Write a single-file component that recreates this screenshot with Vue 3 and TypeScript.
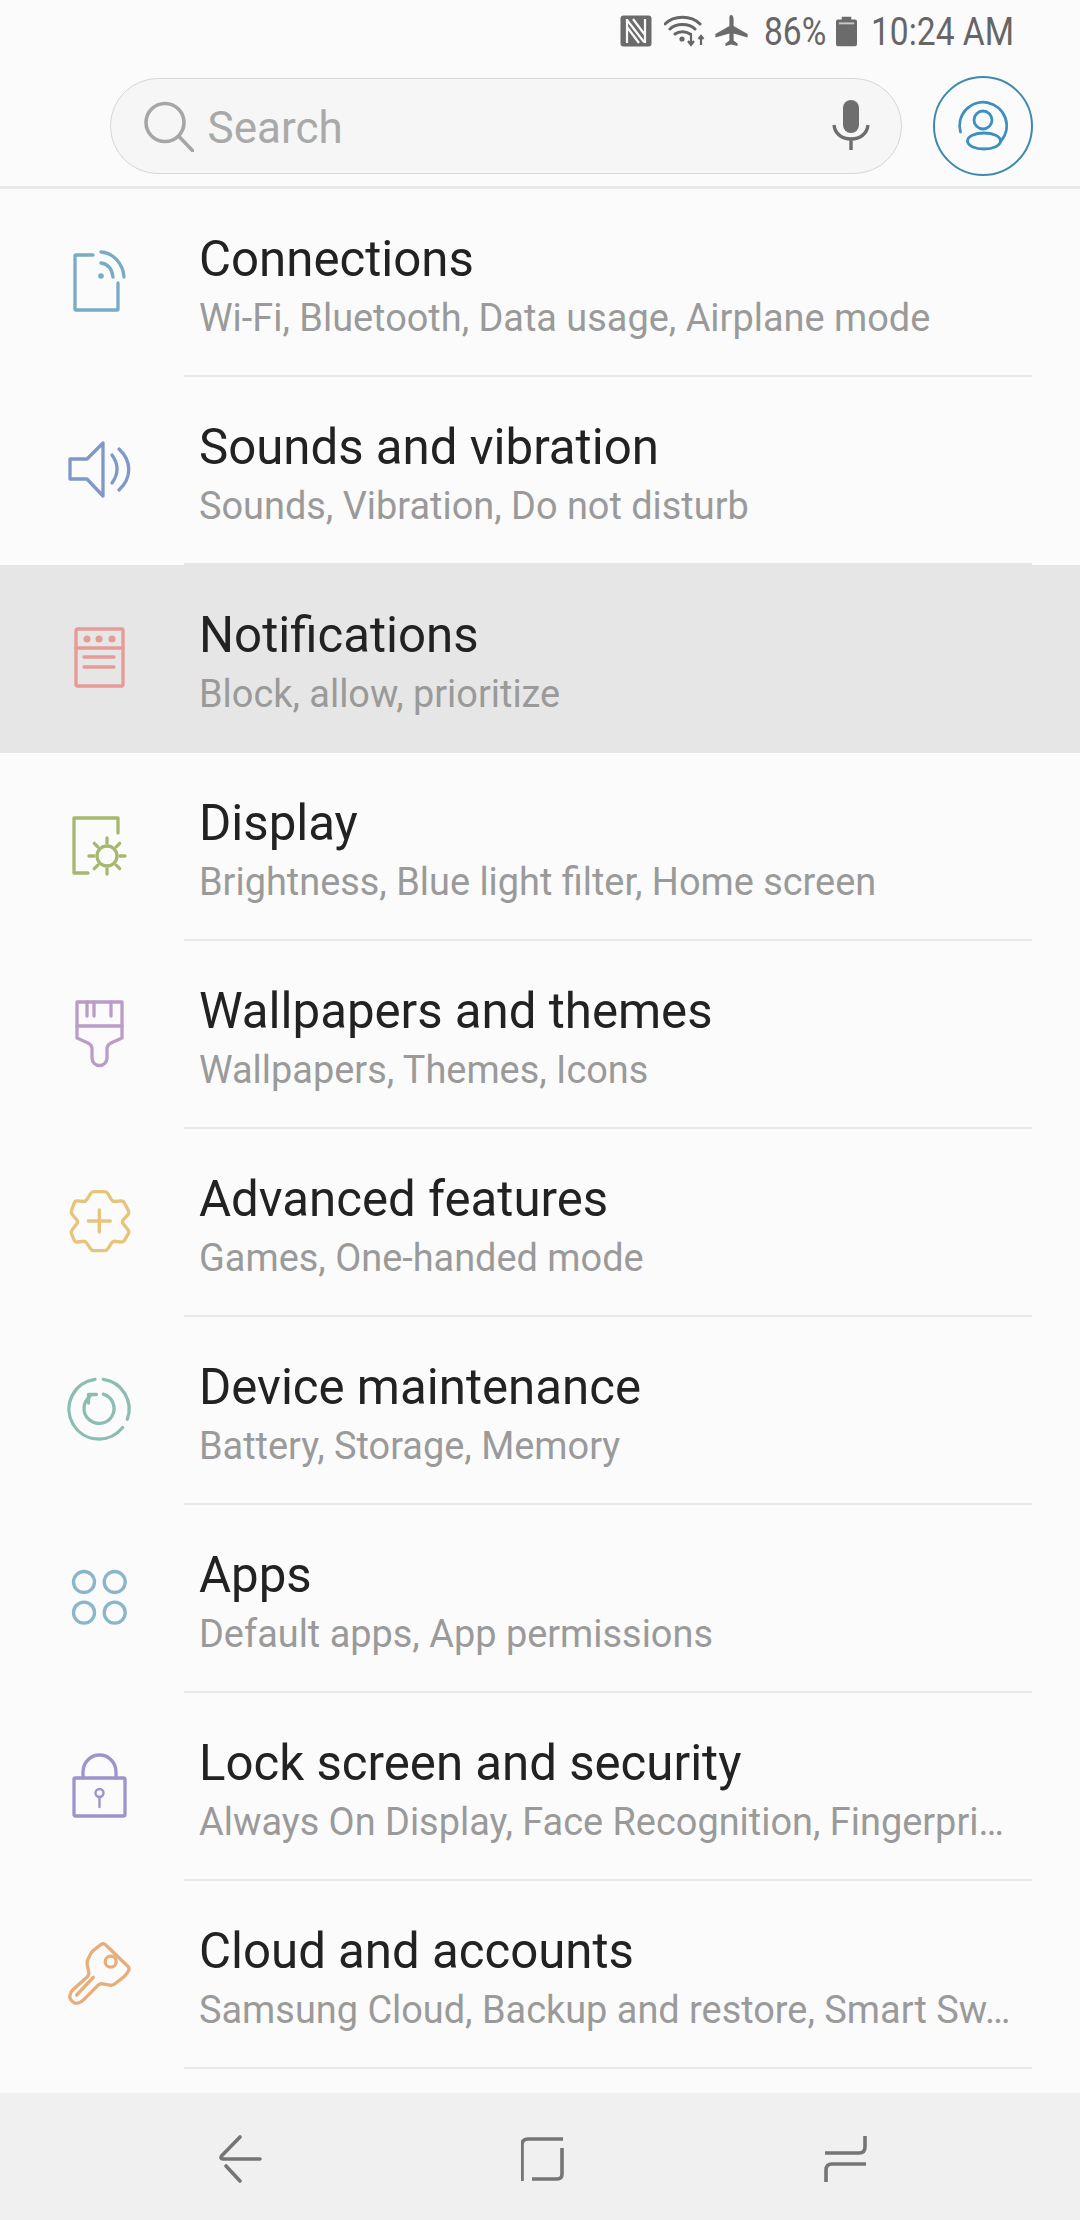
<script setup lang="ts">
interface Item { title: string; sub: string; icon: string; color: string; active?: boolean }
const items: Item[] = [
  { title: 'Connections', sub: 'Wi-Fi, Bluetooth, Data usage, Airplane mode', icon: 'conn', color: '#78abc4' },
  { title: 'Sounds and vibration', sub: 'Sounds, Vibration, Do not disturb', icon: 'sound', color: '#7f97c9' },
  { title: 'Notifications', sub: 'Block, allow, prioritize', icon: 'notif', color: '#e59c97', active: true },
  { title: 'Display', sub: 'Brightness, Blue light filter, Home screen', icon: 'display', color: '#a6b86e' },
  { title: 'Wallpapers and themes', sub: 'Wallpapers, Themes, Icons', icon: 'brush', color: '#bb9cc9' },
  { title: 'Advanced features', sub: 'Games, One-handed mode', icon: 'gear', color: '#e6c47c' },
  { title: 'Device maintenance', sub: 'Battery, Storage, Memory', icon: 'care', color: '#8cbdb2' },
  { title: 'Apps', sub: 'Default apps, App permissions', icon: 'apps', color: '#8ab6cc' },
  { title: 'Lock screen and security', sub: 'Always On Display, Face Recognition, Fingerpri…', icon: 'lock', color: '#9c95cc' },
  { title: 'Cloud and accounts', sub: 'Samsung Cloud, Backup and restore, Smart Sw…', icon: 'key', color: '#e8ad78' },
]

function rounded(pts: number[][], r: number): string {
  const n = pts.length
  let d = ''
  for (let i = 0; i < n; i++) {
    const p = pts[i]
    const a = pts[(i + n - 1) % n]
    const b = pts[(i + 1) % n]
    const la = Math.hypot(a[0] - p[0], a[1] - p[1])
    const lb = Math.hypot(b[0] - p[0], b[1] - p[1])
    const ra = Math.min(r, la / 2) / la
    const rb = Math.min(r, lb / 2) / lb
    const s = [p[0] + (a[0] - p[0]) * ra, p[1] + (a[1] - p[1]) * ra]
    const e = [p[0] + (b[0] - p[0]) * rb, p[1] + (b[1] - p[1]) * rb]
    d += `${i === 0 ? 'M' : 'L'}${s[0].toFixed(1)} ${s[1].toFixed(1)}Q${p[0]} ${p[1]} ${e[0].toFixed(1)} ${e[1].toFixed(1)}`
  }
  return d + 'Z'
}

const gearPath = rounded([
  [26.7, 3.7], [41.7, 3.7], [47.7, 13.7], [58.3, 12.7], [64.5, 24.7], [56.7, 33.7],
  [64.5, 43.7], [58.3, 54.3], [47.7, 53], [41.7, 62.7], [26.7, 62.7], [20.5, 53],
  [10, 54.3], [5.7, 43.7], [13.3, 33.7], [5.7, 24.7], [10, 12.7], [20.5, 13.7],
], 2.5)

const keyPath = rounded([
  [38.3, 2.7], [65, 28.3], [61, 35], [47.7, 45.7], [35, 43.3], [16.7, 61.7], [10, 64],
  [4.3, 58.3], [5.7, 51.7], [24.3, 35], [21.7, 21.7], [26.7, 11.7],
], 3)
</script>

<template>
  <div class="phone">
    <div class="status">
      <svg class="st-nfc" width="32" height="32" viewBox="0 0 32 32">
        <rect x="0.5" y="0.5" width="31" height="31" rx="3" fill="#6b6b6b" />
        <path d="M7 4v24M7 5l17 22M25 4v24M13 4l12 16M7 12l12 16" stroke="#fafafa" stroke-width="2.2" fill="none" />
      </svg>
      <svg class="st-wifi" width="42" height="32" viewBox="0 0 42 32" fill="none" stroke="#666" stroke-width="3">
        <path d="M1 9C10 0 27 0 36 9M6 14c6-6 19-6 25 0M11 19c4-3 11-3 15 0" stroke-linecap="round" />
        <circle cx="18" cy="24" r="2.600" fill="#666" stroke="none" />
        <path d="M27 18v12M24 26l3 4 3-4M37 30v-9M34.500 24l2.500-3 2.500 3" stroke-width="2.200" />
      </svg>
      <svg class="st-plane" width="34" height="32" viewBox="0 0 34 32">
        <path fill="#6b6b6b" d="M17 0c1.600 0 2.600 2 2.600 4.500V11l14 8v3.500l-14-4v7l4 3V31L17 29.500 11.400 31v-2.500l4-3v-7l-14 4V19l14-8V4.500C15.400 2 15.400 0 17 0z" />
      </svg>
      <span class="st-pct">86%</span>
      <svg class="st-batt" width="21" height="32" viewBox="0 0 22 32">
        <path fill="#6b6b6b" d="M6 1h10v3h4a2 2 0 0 1 2 2v24a2 2 0 0 1-2 2H2a2 2 0 0 1-2-2V6a2 2 0 0 1 2-2h4z" />
        <rect x="3" y="7" width="16" height="2" fill="#c9c9c9" />
      </svg>
      <span class="st-time">10:24 AM</span>
    </div>

    <div class="header">
      <div class="search">
        <svg class="s-icon" width="52" height="52" viewBox="0 0 52 52" fill="none" stroke="#a6a6a6" stroke-width="3.600">
          <circle cx="23" cy="22.500" r="19" />
          <path d="M37 36.500l14 14.500" stroke-linecap="round" />
        </svg>
        <span class="s-text">Search</span>
        <svg class="s-mic" width="38" height="52" viewBox="0 0 38 52" fill="none">
          <rect x="11" y="0" width="16" height="33" rx="8" fill="#6e6e6e" />
          <path d="M2 25c1 9 8 14 17 14s16-5 17-14M19 39v11" stroke="#6e6e6e" stroke-width="3.400" stroke-linecap="butt" />
        </svg>
      </div>
      <div class="avatar">
        <svg width="52" height="52" viewBox="0 0 52 52" fill="none" stroke="#3c8fc0" stroke-width="2.800">
          <path d="M3.500 32A23.500 23.500 0 1 1 44 41" stroke-linecap="round" />
          <circle cx="26" cy="20" r="9" />
          <ellipse cx="27" cy="41" rx="16.500" ry="8" />
        </svg>
      </div>
    </div>

    <div class="list">
      <div v-for="it in items" :key="it.title" class="row" :class="{ active: it.active }">
        <div class="ic">
          <svg width="70" height="70" viewBox="0 0 70 70" fill="none" :stroke="it.color" stroke-width="3.300" stroke-linecap="round" stroke-linejoin="round">
            <template v-if="it.icon === 'conn'">
              <path d="M28 7H11a1 1 0 0 0-1 1v53a1 1 0 0 0 1 1h41a1 1 0 0 0 1-1V35" />
              <path d="M36 4C48 5 58 15 59 29M36 15C43 16 47 21 48 29" />
              <circle cx="36" cy="28" r="2.800" :fill="it.color" stroke="none" />
            </template>
            <template v-else-if="it.icon === 'sound'">
              <path d="M5 23h17L38 7v53L22 43H5z" />
              <path d="M47 19c6.500 9 6.500 19 0 28M54 13c13 12 13 29 0 41" />
            </template>
            <template v-else-if="it.icon === 'notif'">
              <rect x="11" y="5" width="47" height="57" rx="1.500" />
              <path d="M11 24h47M19 33h30M19 43h30" />
              <circle cx="22" cy="15" r="3.500" :fill="it.color" stroke="none" />
              <circle cx="34" cy="15" r="3.500" :fill="it.color" stroke="none" />
              <circle cx="47" cy="15" r="3.500" :fill="it.color" stroke="none" />
            </template>
            <template v-else-if="it.icon === 'display'">
              <path d="M23 61H9V6h44v15" />
              <circle cx="42" cy="44" r="10" />
              <path d="M42 26v5M42 57v5M24 44h5M55 44h5M29.300 31.300l3.500 3.500M51.200 53.200l3.500 3.500M54.700 31.300l-3.500 3.500M32.800 53.200l-3.500 3.500" />
            </template>
            <template v-else-if="it.icon === 'brush'">
              <path d="M12 2H57V38L46 43c-3 1.500-4 3-4 6v9a7.500 7.500 0 0 1-15 0v-9c0-3-1-4.500-4-6L12 38Z" />
              <path d="M12 26H57M22 2v14M29 2v14M46 2v14" />
            </template>
            <template v-else-if="it.icon === 'gear'">
              <path :d="gearPath" />
              <path d="M34.300 22v22M23.300 33h22" />
            </template>
            <template v-else-if="it.icon === 'care'">
              <path d="M38.300 3.300A30 30 0 0 1 62.300 43.300M57.600 51.500A30 30 0 1 1 30 3.300" />
              <path d="M38.300 18.100A15 15 0 1 1 25 20.500" />
              <path d="M31.500 18.500H23.500V27" />
            </template>
            <template v-else-if="it.icon === 'apps'">
              <circle cx="19" cy="18" r="10.500" />
              <circle cx="49.700" cy="18" r="10.500" />
              <circle cx="19" cy="48.700" r="10.500" />
              <circle cx="49.700" cy="48.700" r="10.500" />
            </template>
            <template v-else-if="it.icon === 'lock'">
              <rect x="9" y="26" width="51" height="38" rx="1.500" />
              <path d="M18 26V20a16.500 17 0 0 1 33 0V26" />
              <circle cx="34.500" cy="41" r="4" stroke-width="2.400" />
              <path d="M34.500 45v10" stroke-width="2.400" />
            </template>
            <template v-else-if="it.icon === 'key'">
              <path :d="keyPath" />
              <circle cx="45.700" cy="21.700" r="5.500" />
              <path d="M11.700 55L28.300 37.300" />
            </template>
          </svg>
        </div>
        <div class="txt">
          <div class="title">{{ it.title }}</div>
          <div class="sub">{{ it.sub }}</div>
        </div>
      </div>
    </div>

    <div class="nav">
      <svg width="44" height="50" viewBox="0 0 44 50" fill="none" stroke="#757575" stroke-width="3.600">
        <path d="M22 2L3.500 21Q2 24 5 24H42M8 31L22 46" stroke-linecap="round" />
      </svg>
      <svg width="44" height="50" viewBox="0 0 44 50" fill="none" stroke="#757575" stroke-width="3.600">
        <path d="M42 4H7Q1 4 1 10V46M41 13V39Q41 44 36 44H11" />
      </svg>
      <svg width="44" height="50" viewBox="0 0 44 50" fill="none" stroke="#757575" stroke-width="3.600">
        <path d="M41 1V12Q41 18 35 18H1M42 29H8Q2 29 2 35V47" />
      </svg>
    </div>
  </div>
</template>

<style>
html, body { margin: 0; padding: 0; background: #fafafa; }
</style>

<style scoped>
.phone {
  width: 1080px;
  height: 2220px;
  background: #fbfbfb;
  font-family: Roboto, "Liberation Sans", sans-serif;
  display: flex;
  flex-direction: column;
  overflow: hidden;
}
.status {
  height: 44px;
  flex: none;
  padding: 15px 68px 0 0;
  box-sizing: border-box;
  display: flex;
  align-items: flex-start;
  justify-content: flex-end;
  color: #666;
  font-size: 39px;
  line-height: 32px;
}
.status svg { flex: none; }
.status span { display: block; white-space: nowrap; transform-origin: left center; margin-top: 1px; }
.st-nfc { margin-right: 12px; }
.st-wifi { margin-right: 8px; }
.st-plane { margin-right: 16px; }
.st-pct { width: 59px; margin-right: 13px; transform: scaleX(0.86); }
.st-batt { margin-right: 14px; }
.st-time { width: 141px; transform: scaleX(0.86); }
.header {
  height: 145px;
  flex: none;
  box-sizing: border-box;
  border-bottom: 3px solid #e9e9e9;
  display: flex;
  align-items: center;
  padding: 22px 47px 0 110px;
  justify-content: space-between;
}
.search {
  width: 792px;
  height: 96px;
  box-sizing: border-box;
  border: 1.500px solid #d6d6d6;
  border-radius: 48px;
  background: #f6f6f6;
  display: flex;
  align-items: center;
  padding: 0 31px 0 30.500px;
}
.s-icon { flex: none; }
.s-text { flex: 1; font-size: 44px; color: #a9a9a9; margin: 3px 0 0 14px; }
.s-mic { flex: none; }
.avatar {
  width: 100px;
  height: 100px;
  box-sizing: border-box;
  border: 2px solid #3c8aaf;
  border-radius: 50%;
  display: flex;
  align-items: center;
  justify-content: center;
}
.list { flex: 1; overflow: hidden; }
.row {
  height: 188px;
  display: flex;
  align-items: stretch;
  position: relative;
  box-sizing: border-box;
}
.row.active { background: #e6e6e6; }
.row::after {
  content: "";
  position: absolute;
  left: 184px;
  right: 48px;
  bottom: 0;
  height: 2px;
  background: #e8e8e8;
}
.row.active::after { display: none; }
.ic { width: 199px; flex: none; display: flex; align-items: center; padding-left: 65px; box-sizing: border-box; }
.ic svg { flex: none; }
.txt { flex: 1; min-width: 0; padding: 41px 48px 0 0; box-sizing: border-box; }
.title { font-size: 49.200px; line-height: 58px; color: #222; white-space: nowrap; }
.sub {
  font-size: 37.900px;
  line-height: 46px;
  color: #9a9a9a;
  margin-top: 7px;
  white-space: nowrap;
}
.nav {
  height: 127px;
  background: #f0f0f0;
  flex: none;
  display: flex;
  align-items: center;
  justify-content: space-between;
  padding: 7px 212px 0 218px;
  box-sizing: border-box;
}
</style>
